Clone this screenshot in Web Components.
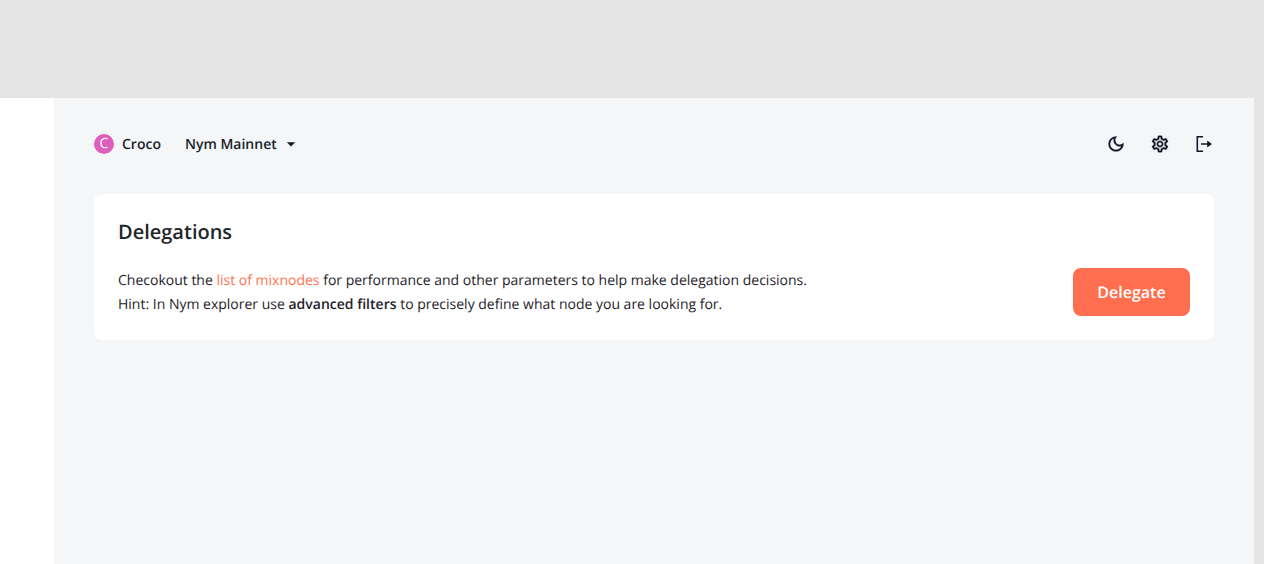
<!DOCTYPE html>
<html lang="en">
<head>
<meta charset="utf-8">
<title>Delegations</title>
<style>
html,body{margin:0;padding:0;height:564px;overflow:hidden;background:#e4e4e4;font-family:"Open Sans",sans-serif;color:#1d2125;text-rendering:geometricPrecision}
</style>
</head>
<body>
<app-shell>
  <app-header slot="header"></app-header>
  <delegation-card>
    <span slot="title">Delegations</span>
    Checokout the <a href="#">list of mixnodes</a> for performance and other parameters to help make delegation decisions.<br>
    Hint: In Nym explorer use <b>advanced filters</b> to precisely define what node you are looking for.
    <app-button slot="action">Delegate</app-button>
  </delegation-card>
</app-shell>
<script>
function def(name,html){
  customElements.define(name,class extends HTMLElement{
    constructor(){super();this.attachShadow({mode:"open"}).innerHTML=html;}
  });
}
def("app-shell",`<style>
:host{display:flex;flex-direction:column;height:564px;box-sizing:border-box;padding-top:98px;background:#e4e4e4}
.row{flex:1;display:flex;min-height:0}
.nav{width:54px;flex:none;background:#fff}
.main{flex:1;background:#f4f6f8;padding:32px 40px 0;display:flex;flex-direction:column;gap:36px}
.gutter{width:10px;flex:none}
</style>
<div class="row"><div class="nav"></div><div class="main"><slot name="header"></slot><slot></slot></div><div class="gutter"></div></div>`);
def("app-header",`<style>
:host{display:flex;align-items:center;height:28px;font:600 14px/20px "Open Sans",sans-serif;color:#1b1f2b}
.av{width:20px;height:20px;border-radius:50%;background:#dd5ebc;color:#fff;font:500 14px/20px "Open Sans",sans-serif;text-align:center;margin-right:8px}
.name{padding-top:2px}
.net{margin-left:24px;display:flex;align-items:center}
.net span{padding-top:2px}
.net svg{margin-left:4px;width:20px;height:20px;fill:#121726}
.sp{flex:1}
.ic{display:flex;gap:24px}
.ic svg{width:20px;height:20px;fill:#121726;display:block}
.thick path{stroke:#121726;stroke-width:.25}
</style>
<span class="av">C</span><span class="name">Croco</span>
<span class="net"><span>Nym Mainnet</span><svg viewBox="0 0 24 24"><path d="M7 10l5 5 5-5z"/></svg></span>
<span class="sp"></span>
<span class="ic">
<svg class="thick" viewBox="0 0 24 24"><path d="M9.37 5.51c-.18.64-.27 1.31-.27 1.99 0 4.08 3.32 7.4 7.4 7.4.68 0 1.35-.09 1.99-.27C17.45 17.19 14.93 19 12 19c-3.86 0-7-3.14-7-7 0-2.93 1.81-5.45 4.37-6.49zM12 3c-4.97 0-9 4.03-9 9s4.03 9 9 9 9-4.03 9-9c0-.46-.04-.92-.1-1.36-.98 1.37-2.58 2.26-4.4 2.26-2.98 0-5.4-2.42-5.4-5.4 0-1.81.89-3.42 2.26-4.4-.44-.06-.9-.1-1.36-.1z"/></svg>
<svg class="thick" viewBox="0 0 24 24"><path d="M19.43 12.98c.04-.32.07-.64.07-.98 0-.34-.03-.66-.07-.98l2.11-1.65c.19-.15.24-.42.12-.64l-2-3.46c-.09-.16-.26-.25-.44-.25-.06 0-.12.01-.17.03l-2.49 1c-.52-.4-1.08-.73-1.69-.98l-.38-2.65C14.46 2.18 14.25 2 14 2h-4c-.25 0-.46.18-.49.42l-.38 2.65c-.61.25-1.17.59-1.69.98l-2.49-1c-.06-.02-.12-.03-.18-.03-.17 0-.34.09-.43.25l-2 3.46c-.13.22-.07.49.12.64l2.11 1.65c-.04.32-.07.65-.07.98 0 .33.03.66.07.98l-2.11 1.65c-.19.15-.24.42-.12.64l2 3.46c.09.16.26.25.44.25.06 0 .12-.01.17-.03l2.49-1c.52.4 1.08.73 1.69.98l.38 2.65c.03.24.24.42.49.42h4c.25 0 .46-.18.49-.42l.38-2.65c.61-.25 1.17-.59 1.69-.98l2.49 1c.06.02.12.03.18.03.17 0 .34-.09.43-.25l2-3.46c.12-.22.07-.49-.12-.64l-2.11-1.65zm-1.98-1.71c.04.31.05.52.05.73 0 .21-.02.43-.05.73l-.14 1.13.89.7 1.08.84-.7 1.21-1.27-.51-1.04-.42-.9.68c-.43.32-.84.56-1.25.73l-1.06.43-.16 1.13-.2 1.35h-1.4l-.19-1.35-.16-1.13-1.06-.43c-.43-.18-.83-.41-1.23-.71l-.91-.7-1.06.43-1.27.51-.7-1.21 1.08-.84.89-.7-.14-1.13c-.03-.31-.05-.54-.05-.74s.02-.43.05-.73l.14-1.13-.89-.7-1.08-.84.7-1.21 1.27.51 1.04.42.9-.68c.43-.32.84-.56 1.25-.73l1.06-.43.16-1.13.2-1.35h1.39l.19 1.35.16 1.13 1.06.43c.43.18.83.41 1.23.71l.91.7 1.06-.43 1.27-.51.7 1.21-1.07.85-.89.7.14 1.13zM12 8c-2.21 0-4 1.79-4 4s1.79 4 4 4 4-1.79 4-4-1.79-4-4-4zm0 6c-1.1 0-2-.9-2-2s.9-2 2-2 2 .9 2 2-.9 2-2 2z"/></svg>
<svg viewBox="0 0 20 20"><path d="M9 2.8H3.3v14.4H9" fill="none" stroke="#121726" stroke-width="1.6"/><path d="M7 9.2h6.2V6.5L18 10l-4.8 3.5v-2.7H7z"/></svg>
</span>`);
def("delegation-card",`<style>
:host{display:block;background:#fff;border-radius:8px;padding:24px;font:400 14px/24px "Open Sans",sans-serif;color:#1f222b}
.t{font:600 20px/28px "Open Sans",sans-serif;margin-bottom:22px;height:28px;color:#23262b}
.r{display:flex;justify-content:space-between;align-items:center}
.x{margin:1px 0 -1px}
::slotted(a){color:#ff7350;text-decoration:none}
::slotted(b){font-weight:600}
</style>
<div class="t"><slot name="title"></slot></div>
<div class="r"><div class="x"><slot></slot></div><slot name="action"></slot></div>`);
def("app-button",`<style>
:host{display:block;box-sizing:border-box;width:117px;height:48px;border-radius:8px;background:#ff6e4f;color:#fff;font:600 16px/48px "Open Sans",sans-serif;text-align:center}
</style><slot></slot>`);
</script>
</body>
</html>
